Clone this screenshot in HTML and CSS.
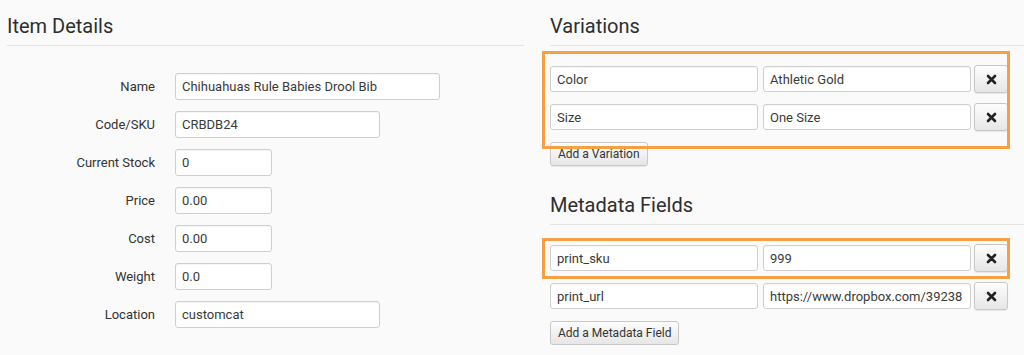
FILE: index.html
```html
<!DOCTYPE html>
<html lang="en">
<head>
  <meta charset="UTF-8">
  <title>Item Details</title>
  <link rel="stylesheet" href="styles.css">
</head>
<body>

  <div class="page">
    <section class="details">
      <h2 class="section-title">Item Details</h2>

      <form class="item-form">
        <div class="field">
          <label for="name">Name</label>
          <input type="text" id="name" class="wide" value="Chihuahuas Rule Babies Drool Bib">
        </div>
        <div class="field">
          <label for="sku">Code/SKU</label>
          <input type="text" id="sku" class="medium" value="CRBDB24">
        </div>
        <div class="field">
          <label for="stock">Current Stock</label>
          <input type="text" id="stock" class="short" value="0">
        </div>
        <div class="field">
          <label for="price">Price</label>
          <input type="text" id="price" class="short" value="0.00">
        </div>
        <div class="field">
          <label for="cost">Cost</label>
          <input type="text" id="cost" class="short" value="0.00">
        </div>
        <div class="field">
          <label for="weight">Weight</label>
          <input type="text" id="weight" class="short" value="0.0">
        </div>
        <div class="field">
          <label for="location">Location</label>
          <input type="text" id="location" class="medium" value="customcat">
        </div>
      </form>
    </section>

    <section class="extras">
      <h2 class="section-title">Variations</h2>

      <div class="pairs variations">
        <div class="highlight"></div>
        <div class="pair">
          <input type="text" value="Color">
          <input type="text" value="Athletic Gold">
          <button type="button" class="remove" title="Remove">
            <svg width="11" height="11" viewBox="0 0 11 11"><path d="M2 2 L9 9 M9 2 L2 9" stroke="#222" stroke-width="2.6" stroke-linecap="round"/></svg>
          </button>
        </div>
        <div class="pair">
          <input type="text" value="Size">
          <input type="text" value="One Size">
          <button type="button" class="remove" title="Remove">
            <svg width="11" height="11" viewBox="0 0 11 11"><path d="M2 2 L9 9 M9 2 L2 9" stroke="#222" stroke-width="2.6" stroke-linecap="round"/></svg>
          </button>
        </div>
      </div>
      <button type="button" class="add">Add a Variation</button>

      <h2 class="section-title meta-title">Metadata Fields</h2>

      <div class="pairs">
        <div class="pair marked">
          <div class="highlight"></div>
          <input type="text" value="print_sku">
          <input type="text" value="999">
          <button type="button" class="remove" title="Remove">
            <svg width="11" height="11" viewBox="0 0 11 11"><path d="M2 2 L9 9 M9 2 L2 9" stroke="#222" stroke-width="2.6" stroke-linecap="round"/></svg>
          </button>
        </div>
        <div class="pair">
          <input type="text" value="print_url">
          <input type="text" value="https://www.dropbox.com/39238">
          <button type="button" class="remove" title="Remove">
            <svg width="11" height="11" viewBox="0 0 11 11"><path d="M2 2 L9 9 M9 2 L2 9" stroke="#222" stroke-width="2.6" stroke-linecap="round"/></svg>
          </button>
        </div>
      </div>
      <button type="button" class="add">Add a Metadata Field</button>
    </section>
  </div>

</body>
</html>
```

FILE: styles.css
```css
body {
  margin: 0;
  font-family: Roboto, "Liberation Sans", sans-serif;
  background: #fafafa;
  color: #333;
}

.page {
  display: grid;
  grid-template-columns: 517px 1fr;
  column-gap: 26px;
  padding-left: 7px;
}

.section-title {
  margin: 0;
  padding: 13px 0 6px;
  font-size: 20px;
  line-height: 26px;
  font-weight: 400;
  color: #2e2e2e;
  border-bottom: 1px solid #e4e4e4;
}

.item-form {
  margin-top: 27px;
  display: flex;
  flex-direction: column;
  gap: 11px;
}

.field {
  display: flex;
  align-items: center;
  gap: 20px;
}

.field label {
  width: 148px;
  text-align: right;
  font-size: 13px;
  color: #333;
}

input {
  height: 27px;
  box-sizing: border-box;
  padding: 0 6px;
  font-family: Roboto, "Liberation Sans", sans-serif;
  font-size: 13px;
  color: #3a3a3a;
  background: white;
  border: 1px solid #cfcfcf;
  border-radius: 3px;
  box-shadow: inset 0 1px 1px rgba(0,0,0,0.04);
}

.wide {
  width: 265px;
}

.medium {
  width: 205px;
}

.short {
  width: 97px;
}

.pairs {
  margin-top: 19px;
  display: flex;
  flex-direction: column;
  gap: 10px;
  position: relative;
}

.pair {
  display: flex;
  align-items: center;
  position: relative;
}

.pair input {
  width: 208px;
  height: 26px;
  margin-right: 5px;
}

.pair input + input {
  margin-right: 3px;
}

.remove {
  width: 34px;
  height: 28px;
  display: flex;
  align-items: center;
  justify-content: center;
  padding: 0;
  border: 1px solid #c8c8c8;
  border-radius: 3px;
  background: linear-gradient(#fdfdfd, #e6e6e6);
  box-shadow: 0 1px 1px rgba(0,0,0,0.08);
  cursor: pointer;
}

.add {
  margin-top: 11px;
  height: 24px;
  padding: 0 7px;
  font-family: Roboto, "Liberation Sans", sans-serif;
  font-size: 12px;
  color: #333;
  border: 1px solid #c8c8c8;
  border-radius: 3px;
  background: linear-gradient(#fdfdfd, #e6e6e6);
  box-shadow: 0 1px 1px rgba(0,0,0,0.08);
  cursor: pointer;
}

.meta-title {
  margin-top: 13px;
}

/* annotation boxes drawn over the rows */
.highlight {
  position: absolute;
  left: -8px;
  width: 468px;
  box-sizing: border-box;
  border: 3px solid #f5a045;
  pointer-events: none;
  z-index: 2;
}

.variations .highlight {
  top: -14px;
  bottom: -18px;
}

.marked .highlight {
  top: -6px;
  bottom: -7px;
}
```
